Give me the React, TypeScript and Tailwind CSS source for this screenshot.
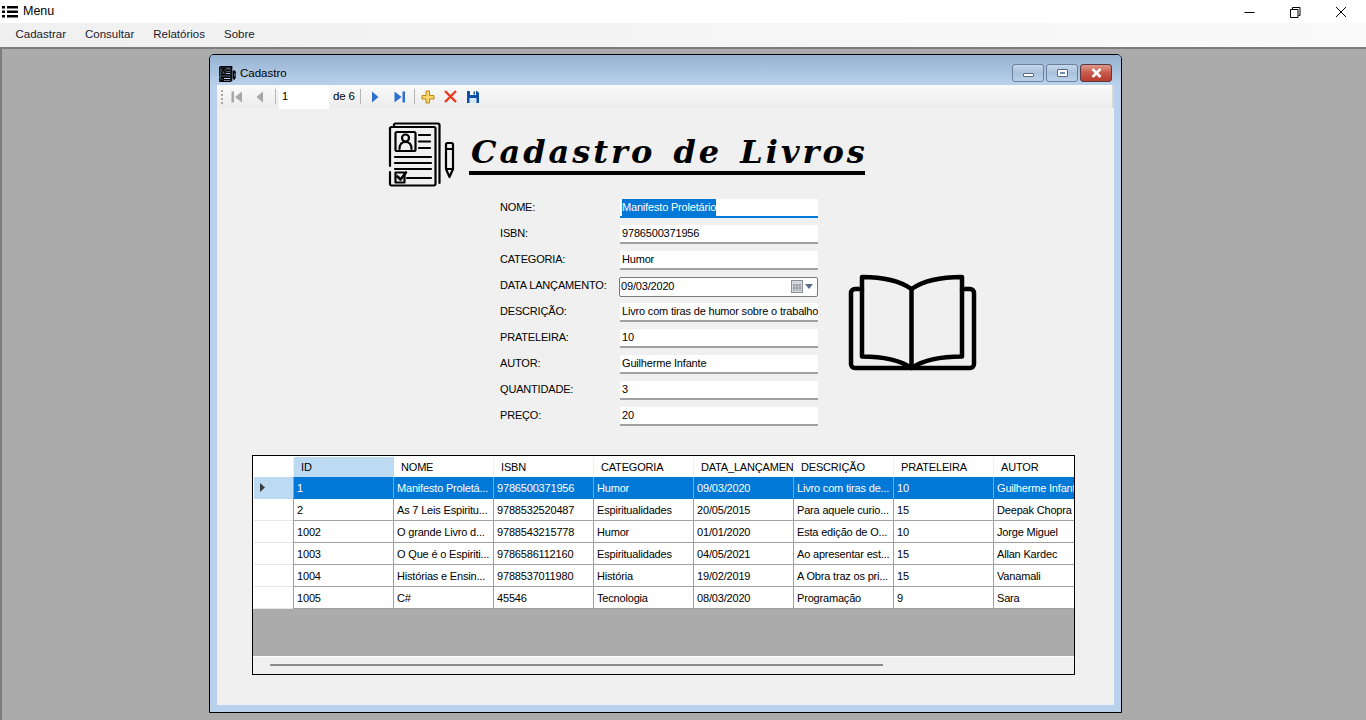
import React from 'react';

const menuItems = ['Cadastrar', 'Consultar', 'Relatórios', 'Sobre'];

const fields = [
    { label: 'NOME:', value: 'Manifesto Proletário' },
    { label: 'ISBN:', value: '9786500371956' },
    { label: 'CATEGORIA:', value: 'Humor' },
    { label: 'DATA LANÇAMENTO:', value: '09/03/2020' },
    { label: 'DESCRIÇÃO:', value: 'Livro com tiras de humor sobre o trabalho' },
    { label: 'PRATELEIRA:', value: '10' },
    { label: 'AUTOR:', value: 'Guilherme Infante' },
    { label: 'QUANTIDADE:', value: '3' },
    { label: 'PREÇO:', value: '20' },
];

const columns = ['ID', 'NOME', 'ISBN', 'CATEGORIA', 'DATA_LANÇAMENTO', 'DESCRIÇÃO', 'PRATELEIRA', 'AUTOR'];

const rows = [
    ['1', 'Manifesto Proletá...', '9786500371956', 'Humor', '09/03/2020', 'Livro com tiras de...', '10', 'Guilherme Infante'],
    ['2', 'As 7 Leis Espiritu...', '9788532520487', 'Espiritualidades', '20/05/2015', 'Para aquele curio...', '15', 'Deepak Chopra'],
    ['1002', 'O grande Livro d...', '9788543215778', 'Humor', '01/01/2020', 'Esta edição de O...', '10', 'Jorge Miguel'],
    ['1003', 'O Que é o Espiriti...', '9786586112160', 'Espiritualidades', '04/05/2021', 'Ao apresentar est...', '15', 'Allan Kardec'],
    ['1004', 'Histórias e Ensin...', '9788537011980', 'História', '19/02/2019', 'A Obra traz os pri...', '15', 'Vanamali'],
    ['1005', 'C#', '45546', 'Tecnologia', '08/03/2020', 'Programação', '9', 'Sara'],
];

const FormIcon = ({ className, stroke = 2.2 }: { className: string; stroke?: number }) => (
    <svg className={className} viewBox="0 0 68 66" fill="none" stroke="#000" strokeWidth={stroke} strokeLinejoin="round" strokeLinecap="round">
        <path d="M6 5V3a1.5 1.5 0 0 1 1.5-1.5H50A1.5 1.5 0 0 1 51.5 3v58" />
        <path d="M2 6.5a1.5 1.5 0 0 1 1.5-1.5H46a1.5 1.5 0 0 1 1.5 1.5V62a1.5 1.5 0 0 1-1.5 1.5H3.500A1.5 1.5 0 0 1 2 62V50" />
        <path d="M2 44V6.500" />
        <rect x="7.500" y="10" width="20" height="19" rx="1.500" />
        <circle cx="17.500" cy="16" r="3.500" />
        <path d="M11.500 27c0-5 2-7 6-7s6 2 6 7" />
        <path d="M31 13h11M31 19.500h11M31 26h11M7 35h36M7 41h36M7 47h36M19 56h24" />
        <path d="M7.500 50.500h9v10h-9z" />
        <path d="M9.500 54.500l3 3 5.500-7" strokeWidth="2.600" />
        <path d="M58 22.500a1.500 1.500 0 0 1 1.500-1.500h4a1.500 1.500 0 0 1 1.500 1.500V47l-3.500 8-3.500-8z" />
        <path d="M58 27h7M58 47h7" />
    </svg>
);

const BookIcon = () => (
    <svg className="w-[129px] h-[97px] shrink-0" viewBox="0 0 129 97" fill="none" stroke="#000" strokeWidth="4.500" strokeLinejoin="round" strokeLinecap="round">
        <path d="M63.500 15C52 7 36 3 14 3v79.500c22 0 37 3 49.500 11.500C76 85.500 92 82.500 114 82.500V3C92 3 75 7 63.500 15z" />
        <path d="M63.500 15v79" />
        <path d="M14 15H7a4 4 0 0 0-4 4v71a4 4 0 0 0 4 4h115a4 4 0 0 0 4-4V19a4 4 0 0 0-4-4h-8" />
    </svg>
);

const Separator = () => <div className="w-px h-[15px] bg-[#b4b4b4] shrink-0" />;

const Toolbar = () => (
    <div className="h-[23px] flex items-center bg-gradient-to-b from-[#fafafa] to-[#ececec] border-r-2 border-[#d8d8d8] shrink-0">
        <div className="ml-[4px] w-[2px] h-[14px] border-l-2 border-dotted border-[#a8a8a8]" />
        <svg className="ml-[8px] w-[12px] h-[12px]" viewBox="0 0 12 12">
            <rect x="0.500" y="0.500" width="2.500" height="11" fill="#a6a6a6" />
            <path d="M11 0.500v11L4 6z" fill="#a6a6a6" />
        </svg>
        <svg className="ml-[13px] w-[8px] h-[12px]" viewBox="0 0 8 12">
            <path d="M7 0.500v11L0.500 6z" fill="#a6a6a6" />
        </svg>
        <div className="ml-[11px]"><Separator /></div>
        <div className="ml-[3px] w-[50px] h-[24px] bg-white pl-[3px] flex items-center">1</div>
        <span className="ml-[4px] w-[26px] text-[11.500px]">de 6</span>
        <div className="ml-[1px]"><Separator /></div>
        <svg className="ml-[10px] w-[8px] h-[12px]" viewBox="0 0 8 12">
            <path d="M1 0.500v11L7.500 6z" fill="#2f6fd0" />
        </svg>
        <svg className="ml-[15px] w-[12px] h-[12px]" viewBox="0 0 12 12">
            <path d="M0.500 0.500v11L7.500 6z" fill="#2f6fd0" />
            <rect x="8.500" y="0.500" width="2.500" height="11" fill="#2f6fd0" />
        </svg>
        <div className="ml-[8px]"><Separator /></div>
        <svg className="ml-[6px] w-[14px] h-[14px]" viewBox="0 0 14 14">
            <path d="M5 1h3.500v4.500H13V9H8.500v4H5V9H1V5.500h4z" fill="#fbd66b" stroke="#b8860b" strokeWidth="1" />
        </svg>
        <svg className="ml-[9px] w-[13px] h-[13px]" viewBox="0 0 13 13">
            <path d="M1 1l11 11M12 1L1 12" stroke="#ec3a1e" strokeWidth="2.400" />
        </svg>
        <svg className="ml-[10px] w-[12px] h-[12px]" viewBox="0 0 12 12">
            <path d="M0 0h10l2 2v10H0z" fill="#0a4fa8" />
            <rect x="3" y="0" width="6" height="4" fill="#fff" />
            <rect x="6.500" y="0.500" width="1.500" height="3" fill="#0a4fa8" />
            <rect x="2.500" y="7" width="7" height="5" fill="#d8e6f6" />
        </svg>
    </div>
);

const FieldInput = ({ value, index }: { value: string; index: number }) => {
    if (index === 3) {
        return (
            <div className="ml-[-1px] w-[200px] h-[20px] bg-white border border-[#7a7a7a] rounded-[2px] pl-[1px] flex items-center justify-between">
                <span>{value}</span>
                <div className="flex items-center mr-[4px]">
                    <svg className="w-[12px] h-[13px]" viewBox="0 0 12 13">
                        <rect x="0.500" y="0.500" width="11" height="12" fill="#d5d9de" stroke="#8a8f96" />
                        <path d="M3 4v7M6 4v7M9 4v7M2 5h8M2 8h8" stroke="#8a8f96" />
                    </svg>
                    <svg className="ml-[2px] w-[8px] h-[5px]" viewBox="0 0 8 5">
                        <path d="M0 0h8L4 5z" fill="#5a6f8c" />
                    </svg>
                </div>
            </div>
        );
    }
    return (
        <div className={`w-[198px] h-[19px] bg-white border-b-2 pl-[2px] flex items-center whitespace-nowrap overflow-hidden ${index === 0 ? 'border-[#0078d7]' : 'border-[#a0a0a0]'}`}>
            {index === 0 ? <span className="bg-[#0078d7] text-white">{value}</span> : value}
        </div>
    );
};

const DataGrid = () => (
    <div className="ml-[35px] w-[823px] h-[220px] border border-black bg-white flex flex-col overflow-hidden shrink-0">
        <div className="flex h-[21px] pt-[1px] pl-[1px] shrink-0 bg-white">
            <div className="w-[40px] border-r border-[#f0f0f0] shrink-0" />
            {columns.map((col, i) => (
                <div key={col} className={`w-[100px] shrink-0 pl-[7px] leading-[20px] whitespace-nowrap overflow-hidden ${i === 0 ? 'bg-[#bcdaf2]' : 'border-r border-[#f0f0f0]'}`}>
                    {col}
                </div>
            ))}
        </div>
        {rows.map((row, r) => (
            <div key={row[0]} className="flex h-[22px] pl-[1px] shrink-0">
                <div className={`w-[39px] shrink-0 border-b flex items-center pl-[6px] ${r === 0 ? 'bg-[#bcdaf2] border-[#bcdaf2]' : 'bg-white border-[#e6e6e6]'}`}>
                    {r === 0 && (
                        <svg className="w-[5px] h-[9px]" viewBox="0 0 5 9">
                            <path d="M0 0l5 4.500L0 9z" fill="#3c3c3c" />
                        </svg>
                    )}
                </div>
                {row.map((cell, c) => (
                    <div key={c} className={`w-[100px] shrink-0 pl-[3px] border-l border-[#a0a0a0] leading-[22px] whitespace-nowrap overflow-hidden ${r === 0 ? 'bg-[#0078d7] text-white border-b border-b-[#0078d7]' : 'bg-white border-b border-b-[#a0a0a0]'}`}>
                        {cell}
                    </div>
                ))}
            </div>
        ))}
        <div className="flex-1 bg-[#ababab]" />
        <div className="h-[18px] bg-[#f0f0f0] border-t border-white pl-[17px] pt-[7px] shrink-0">
            <div className="w-[613px] h-[2px] bg-[#8a8a8a]" />
        </div>
    </div>
);

const WindowButton = ({ children, close }: { children: React.ReactNode; close?: boolean }) => (
    <div className={`w-[32px] h-[18px] rounded-[3px] border flex items-center justify-center ${close ? 'border-[#5a3a3e] bg-gradient-to-b from-[#dc9a8e] via-[#c8584a] to-[#b83c2e]' : 'border-[#6c7f9c] bg-gradient-to-b from-[#c6d8ea] via-[#a9c2dc] to-[#bcd2e8]'}`}>
        {children}
    </div>
);

const App: React.FC = () => {
    return (
        <div className="w-[1366px] h-[720px] flex flex-col overflow-hidden bg-white text-[11px] tracking-[-0.18px] text-black font-['Liberation_Sans',Arial,sans-serif]">
            <div className="h-[23px] flex items-center bg-white shrink-0">
                <svg className="ml-[2px] w-[16px] h-[12px]" viewBox="0 0 16 12">
                    <path d="M0 0h3v2.500H0zM5 0h11v2.500H5zM0 4.500h3V7H0zM5 4.500h11V7H5zM0 9h3v2.500H0zM5 9h11v2.500H5z" fill="#000" />
                </svg>
                <span className="ml-[5px] text-[12.500px] tracking-normal">Menu</span>
                <div className="ml-auto flex items-center">
                    <svg className="w-[46px] h-[16px]" viewBox="0 0 46 16">
                        <path d="M17.500 8.500h10" stroke="#000" />
                    </svg>
                    <svg className="w-[46px] h-[16px]" viewBox="0 0 46 16">
                        <path d="M17.500 5.500h7.500v8h-7.500zM19.500 5V3.500h7.500v8H25.500" fill="none" stroke="#000" />
                    </svg>
                    <svg className="w-[46px] h-[16px] mr-[1px]" viewBox="0 0 46 16">
                        <path d="M17 3l10 10M27 3L17 13" stroke="#000" />
                    </svg>
                </div>
            </div>

            <div className="h-[24px] flex items-center pl-[6px] bg-gradient-to-r from-[#f0f0f0] to-[#fafafa] shrink-0">
                {menuItems.map((item) => (
                    <span key={item} className="px-[9.500px] text-[11.500px] tracking-normal text-[#1a1a2e]">{item}</span>
                ))}
            </div>

            <div className="flex-1 min-h-0 bg-[#ababab] border-t-2 border-l-2 border-[#7d7d7d] pl-[207px] pt-[5px]">
                <div className="w-[913px] h-[659px] bg-[#b9d1ea] border border-black rounded-t-[5px] flex flex-col overflow-hidden">
                    <div className="h-[30px] flex items-center pl-[9px] pr-[9px] pt-[7px] bg-gradient-to-b from-[#97b3d3] to-[#b9d1ea] shrink-0">
                        <FormIcon className="w-[17px] h-[16px]" stroke={5} />
                        <span className="ml-[4px] text-[11.500px] tracking-normal">Cadastro</span>
                        <div className="ml-auto flex gap-[2px] mt-[-2px]">
                            <WindowButton>
                                <div className="w-[11px] h-[4px] bg-white border border-[#5a6a80] rounded-[1px] mt-[4px]" />
                            </WindowButton>
                            <WindowButton>
                                <div className="w-[11px] h-[8px] bg-white border border-[#5a6a80] rounded-[1px] flex items-center justify-center">
                                    <div className="w-[5px] h-[2px] bg-[#6f8fb5]" />
                                </div>
                            </WindowButton>
                            <WindowButton close>
                                <svg className="w-[11px] h-[10px]" viewBox="0 0 11 10">
                                    <path d="M1.500 1l8 8M9.500 1l-8 8" stroke="#fff" strokeWidth="2.500" />
                                </svg>
                            </WindowButton>
                        </div>
                    </div>
                    <div className="mx-[7px] w-[897px] h-[620px] bg-[#f0f0f0] flex flex-col">
                        <Toolbar />
                        <div className="flex items-start pl-[171px] pt-[14px] shrink-0">
                            <FormIcon className="w-[68px] h-[66px] shrink-0" />
                            <div className="ml-[13px] mt-[8px] w-[396px] pl-[2px] h-[45px] border-b-4 border-black text-[32px] font-bold tracking-[3px] [word-spacing:4px] leading-[45px] italic whitespace-pre font-['DejaVu_Serif',serif]">
                                Cadastro de Livros
                            </div>
                        </div>
                        <div className="flex items-start pl-[283px] mt-[11px] shrink-0">
                            <div className="flex flex-col gap-[7px] w-[318px] shrink-0">
                                {fields.map((field, i) => (
                                    <div key={field.label} className="flex items-center h-[19px]">
                                        <span className="w-[120px] shrink-0 whitespace-nowrap mt-[-2px]">{field.label}</span>
                                        <FieldInput value={field.value} index={i} />
                                    </div>
                                ))}
                            </div>
                            <div className="ml-[30px] mt-[75px]">
                                <BookIcon />
                            </div>
                        </div>
                        <div className="mt-[29px]">
                            <DataGrid />
                        </div>
                    </div>
                </div>
            </div>
        </div>
    );
};

export default App;
